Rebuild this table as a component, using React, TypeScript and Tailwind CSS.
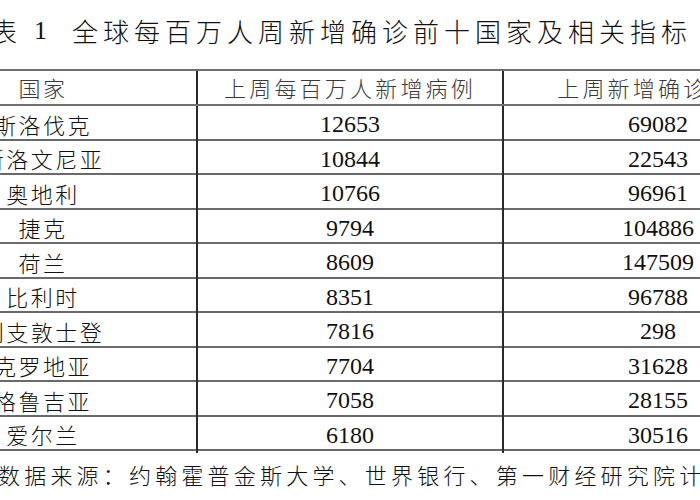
import React from "react";

const rows: [string, string, string][] = [
  ["斯洛伐克", "12653", "69082"],
  ["斯洛文尼亚", "10844", "22543"],
  ["奥地利", "10766", "96961"],
  ["捷克", "9794", "104886"],
  ["荷兰", "8609", "147509"],
  ["比利时", "8351", "96788"],
  ["列支敦士登", "7816", "298"],
  ["克罗地亚", "7704", "31628"],
  ["格鲁吉亚", "7058", "28155"],
  ["爱尔兰", "6180", "30516"],
];

export default function App() {
  return (
    <div className="w-[700px] h-[500px] overflow-hidden bg-white text-[#111] font-['Noto_Sans_CJK_SC','Noto_Sans',sans-serif]">
      <div className="h-[69px] ml-[-9px] flex items-center text-[26px] font-light leading-none whitespace-nowrap pb-[8px]">
        <span>表</span>
        <span className="ml-[17px] font-['Liberation_Serif',serif]">1</span>
        <span className="ml-[25px] tracking-[5px]">全球每百万人周新增确诊前十国家及相关指标</span>
      </div>
      <div className="ml-[-110px] w-[922px] border-t-2 border-[#707070]">
        <div className="grid grid-cols-[308px_306px_308px] h-[35px] border-b-2 border-[#707070] text-[22px] text-[#3a3a3a] font-light">
          <div className="flex items-center justify-center border-r-2 border-[#2a2a2a] tracking-[2.5px]">
            国家
          </div>
          <div className="flex items-center justify-center border-r-2 border-[#2a2a2a] tracking-[3.2px]">
            上周每百万人新增病例
          </div>
          <div className="flex items-center justify-center tracking-[3.2px] whitespace-nowrap">
            上周新增确诊病例
          </div>
        </div>
        {rows.map(([c, a, b]) => (
          <div key={c} className="grid grid-cols-[308px_306px_308px] h-[34.5px] border-b-2 border-[#6a6a6a]">
            <div className="flex items-center justify-center border-r-2 border-[#2a2a2a] text-[22px] tracking-[2.5px] font-light whitespace-nowrap">
              {c}
            </div>
            <div className="flex items-center justify-center border-r-2 border-[#2a2a2a] text-[24px] font-['Liberation_Serif',serif]">
              {a}
            </div>
            <div className="flex items-center justify-center text-[24px] font-['Liberation_Serif',serif]">
              {b}
            </div>
          </div>
        ))}
      </div>
      <div className="ml-[-2px] mt-[12px] text-[22px] tracking-[4.2px] font-light whitespace-nowrap leading-none">
        数据来源：约翰霍普金斯大学、世界银行、第一财经研究院计算
      </div>
    </div>
  );
}
